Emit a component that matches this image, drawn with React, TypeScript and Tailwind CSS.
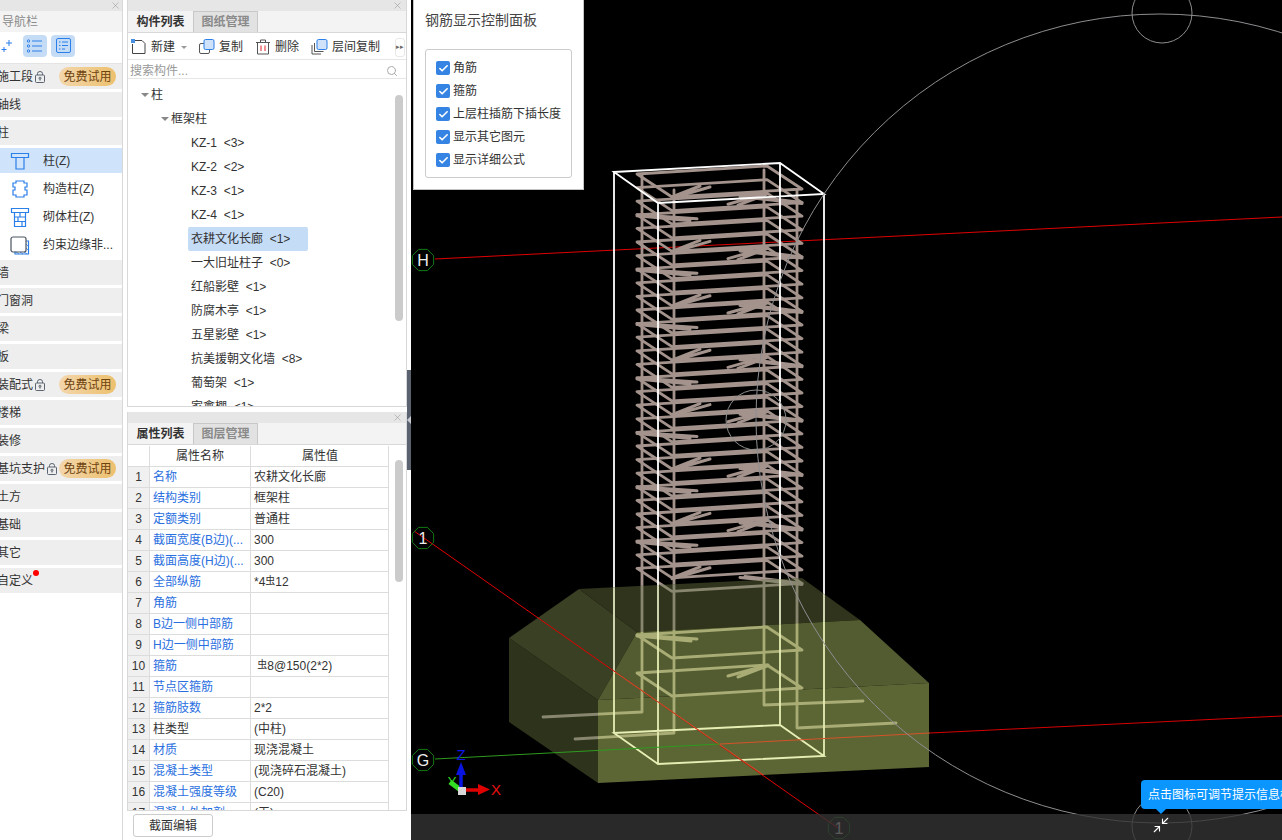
import { Check, Minimize2, Search, X } from "lucide-react";
import type { ReactNode } from "react";

const treeItems = [
  "KZ-1  <3>",
  "KZ-2  <2>",
  "KZ-3  <1>",
  "KZ-4  <1>",
  "衣耕文化长廊  <1>",
  "一大旧址柱子  <0>",
  "红船影壁  <1>",
  "防腐木亭  <1>",
  "五星影壁  <1>",
  "抗美援朝文化墙  <8>",
  "葡萄架  <1>",
  "家禽棚  <1>",
];

const props: [string, ReactNode, boolean][] = [
  ["名称", "农耕文化长廊", true],
  ["结构类别", "框架柱", true],
  ["定额类别", "普通柱", true],
  ["截面宽度(B边)(...", "300", true],
  ["截面高度(H边)(...", "300", true],
  ["全部纵筋", <>*4<Bar />12</>, true],
  ["角筋", "", true],
  ["B边一侧中部筋", "", true],
  ["H边一侧中部筋", "", true],
  ["箍筋", <>&nbsp;<Bar />8@150(2*2)</>, true],
  ["节点区箍筋", "", true],
  ["箍筋肢数", "2*2", true],
  ["柱类型", "(中柱)", false],
  ["材质", "现浇混凝土", true],
  ["混凝土类型", "(现浇碎石混凝土)", true],
  ["混凝土强度等级", "(C20)", true],
  ["混凝土外加剂", "(无)", true],
];

function Bar() {
  return <span className="relative -top-[2px] text-[10px]">虫</span>;
}

function Lock() {
  return (
    <svg width="10" height="12" viewBox="0 0 10 12" fill="none" stroke="#5b6470" strokeWidth="1" className="shrink-0">
      <rect x="0.5" y="4" width="9" height="7.5" rx="1" />
      <path d="M2.5 4V2.6a2.5 2.1 0 0 1 5 0V4" />
      <circle cx="5" cy="7.2" r="1" />
      <path d="M5 8v1.6" />
    </svg>
  );
}

function Badge() {
  return (
    <span className="ml-auto mr-[6px] flex h-[19px] w-[57px] shrink-0 items-center justify-center rounded-full bg-gradient-to-r from-[#f3d6ab] to-[#ecc06c] text-[12px] text-[#6e4310]">
      免费试用
    </span>
  );
}

function NavRow({ label, lock, dot }: { label: string; lock?: boolean; dot?: boolean }) {
  return (
    <div className="relative flex h-[25px] items-center bg-[#eeeeee] text-[12px] text-[#333]">
      <span className="-ml-[3px] whitespace-nowrap">{label}</span>
      {lock && <span className="ml-[2px]"><Lock /></span>}
      {lock && <Badge />}
      {dot && <span className="absolute left-[33px] top-[2px] h-[6px] w-[6px] rounded-full bg-[#f00]" />}
    </div>
  );
}

function ChildRow({ label, icon, active }: { label: string; icon: ReactNode; active?: boolean }) {
  return (
    <div className={`flex h-[25px] items-center text-[12px] text-[#333] ${active ? "bg-[#cfe4fb]" : ""}`}>
      <span className="ml-[10px] flex w-[33px] shrink-0">{icon}</span>
      <span className="whitespace-nowrap">{label}</span>
    </div>
  );
}

const blue = { fill: "none", stroke: "#2a7fe8", strokeWidth: 1.2 };

const columnIcon = (
  <svg width="20" height="20" viewBox="0 0 20 20" {...blue}>
    <path d="M1.5 2.5h17v4h-17zM6 6.5V18h8V6.5" />
  </svg>
);
const structIcon = (
  <svg width="20" height="20" viewBox="0 0 20 20" {...blue}>
    <path d="M6 2h8v2h3v4h-2v3h2v5h-3v2H6v-2H3v-5h2V8H3V4h3z" />
  </svg>
);
const masonryIcon = (
  <svg width="20" height="20" viewBox="0 0 20 20" {...blue}>
    <path d="M1.5 1.5h17v4h-17zM4.5 5.5v14h11v-14M4.5 10h11M4.5 14.500h11M10 5.500V10M8 10v4.500M12 14.500v5" />
  </svg>
);
const edgeIcon = (
  <svg width="20" height="20" viewBox="0 0 20 20" fill="none">
    <path d="M16 6h2.500v13H5v-2.500" stroke="#2a7fe8" strokeWidth="1.200" />
    <path d="M6 17l3 2M10 17l3 2M14 17l3 2M16 9l2 2M16 13l2 2" stroke="#2a7fe8" strokeWidth="0.800" />
    <rect x="1" y="2" width="15" height="15" rx="2" stroke="#4a5260" strokeWidth="1.200" />
  </svg>
);

function PanelHead({ first, second }: { first: string; second: string }) {
  return (
    <>
      <div className="flex h-[11px] shrink-0 items-center justify-end bg-[#e6e6e6] pr-[3px]">
        <X size={11} strokeWidth={1} className="text-[#888]" />
      </div>
      <div className="flex h-[22px] shrink-0 border-b border-[#d8d8d8] bg-[#f3f3f3] text-[12px]">
        <div className="flex w-[65px] items-center justify-center font-bold text-[#333]">{first}</div>
        <div className="flex w-[65px] items-center justify-center border-x border-t border-[#c8c8c8] bg-[#e2e2e2] font-bold text-[#8a8a8a]">{second}</div>
      </div>
    </>
  );
}

function ToolBtn({ icon, label, after }: { icon: ReactNode; label: string; after?: ReactNode }) {
  return (
    <div className="flex items-center gap-[4px] whitespace-nowrap text-[12px] text-[#333]">
      {icon}
      <span>{label}</span>
      {after}
    </div>
  );
}

function Scene() {
  const dense = Array.from({ length: 30 }, (_, i) => 174 + 13.6 * i);
  const stirrup = (y: number) => `M637 ${y}L767 ${y - 8}L802 ${y + 15}L672 ${y + 23}Z`;
  const hook = (y: number, i: number) => {
    if (i % 4 === 0) return `M672 ${y + 23}L700 ${y + 12}M672 ${y + 24}L710 ${y + 13}`;
    if (i % 4 === 1) return `M802 ${y + 15}L745 ${y + 8}M802 ${y + 16}L740 ${y + 9}`;
    if (i % 4 === 2) return `M767 ${y - 8}L728 ${y + 3}M767 ${y - 7}L738 ${y + 4}`;
    return `M637 ${y}L697 ${y + 4}M637 ${y + 1}L690 ${y + 6}`;
  };
  const label = (cx: number, cy: number, t: string) => {
    const pts = Array.from({ length: 8 }, (_, i) => {
      const a = (Math.PI / 4) * i + Math.PI / 8;
      return `${cx + 11.500 * Math.cos(a)},${cy + 11.500 * Math.sin(a)}`;
    }).join(" ");
    return (
      <g key={t + cx}>
        <polygon points={pts} fill="none" stroke="#137a13" strokeWidth="1" />
        <text x={cx} y={cy + 5.500} textAnchor="middle" fontSize="16" fill="#eee">{t}</text>
      </g>
    );
  };
  return (
    <svg viewBox="411 0 871 840" className="absolute inset-0 h-full w-full">
      <defs>
        <clipPath id="frontClip">
          <polygon points="637,632 860,620 929,683 929,767 598,783 598,700" />
        </clipPath>
        <clipPath id="backClip">
          <polygon points="509,638 579,589 802,578 860,620 637,632 598,700 598,783 509,722" />
        </clipPath>
        <g id="rebar" fill="none" strokeWidth="2.800" strokeLinejoin="round" strokeLinecap="round">
          <path d="M642 175V712L543 717M674 190V733L575 739M764 170V705L863 701M797 190V728L896 723" />
          {dense.map((y) => <path key={y} d={stirrup(y)} />)}
          {dense.map((y, i) => <path key={y} d={hook(y, i)} strokeWidth="3" />)}
          <path d={stirrup(635)} />
          <path d={stirrup(673)} />
          <path d="M637 635L697 639M637 636L691 641M768 665L728 676M767 666L738 677" strokeWidth="3" />
        </g>
        <g id="wire" fill="none" strokeWidth="1.800">
          <path d="M614 172L780 163L824 194L658 203ZM614 172V733M780 163V725M658 203V764M824 194V756M614 733L780 725L824 756L658 764Z" />
        </g>
      </defs>

      <path d="M435 259L1282 217" stroke="#e00000" strokeWidth="1" />
      <use href="#rebar" stroke="#a3938c" />
      <use href="#wire" stroke="#ffffff" />

      <polygon points="509,638 598,700 598,783 509,722" fill="#2e341b" />
      <polygon points="509,638 579,589 637,632 598,700" fill="#3a4024" />
      <polygon points="579,589 802,578 860,620 637,632" fill="#30341c" />
      <polygon points="860,620 929,683 598,700 637,632" fill="#525c30" />
      <polygon points="598,700 929,683 929,767 598,783" fill="#5c6635" />

      <g clipPath="url(#backClip)">
        <use href="#rebar" stroke="#88866f" />
        <use href="#wire" stroke="#dfe5c0" />
      </g>
      <g clipPath="url(#frontClip)">
        <use href="#rebar" stroke="#a9ac75" />
        <use href="#wire" stroke="#e6eeb4" />
      </g>

      <path d="M414 531L838 828" stroke="#e00000" strokeWidth="1" />
      <path d="M615 672L765 776" stroke="#c8552c" strokeWidth="1" clipPath="url(#frontClip)" />
      <path d="M435 759L720 744" stroke="#2f9a1f" strokeWidth="1" />
      <path d="M720 744L930 733" stroke="#d5532a" strokeWidth="1" />
      <path d="M930 733L1282 716" stroke="#d80000" strokeWidth="1" />

      <ellipse cx="1160" cy="418.500" rx="404" ry="404.500" fill="none" stroke="#8e8e92" strokeWidth="1" />
      <circle cx="1162" cy="13" r="30" fill="none" stroke="#8e8e8e" strokeWidth="1" />
      <circle cx="1162" cy="826" r="30" fill="none" stroke="#8e8e8e" strokeWidth="1" />
      <circle cx="756" cy="420" r="30" fill="none" stroke="#8e8e8e" strokeWidth="1" />

      {label(423, 260, "H")}
      {label(423, 538, "1")}
      {label(423, 760, "G")}
      {label(839, 828, "1")}

      <path d="M462 791L450 782" stroke="#33dd22" strokeWidth="5" />
      <path d="M461 791V768" stroke="#0a14e0" strokeWidth="3.500" />
      <polygon points="461,762 456,775 466,775" fill="#0a14e0" />
      <path d="M462 790H478" stroke="#e00000" strokeWidth="3.500" />
      <polygon points="490,789.500 478,784 478,795" fill="#e00000" />
      <rect x="458" y="787" width="8" height="8" fill="#d8d8d8" />
      <text x="461" y="760" textAnchor="middle" fontSize="15" fill="#1018e8">Z</text>
      <text x="496" y="795" textAnchor="middle" fontSize="15" fill="#e81010">X</text>
      <text x="452" y="786" textAnchor="middle" fontSize="13" fill="#33dd22">Y</text>
    </svg>
  );
}

export default function App() {
  return (
    <div className="relative flex h-[840px] w-[1282px] overflow-hidden bg-white font-['Liberation_Sans','Noto_Sans_CJK_SC',sans-serif]">
      {/* navigation */}
      <div className="flex w-[123px] shrink-0 flex-col border-r border-[#d8d8d8]">
        <div className="flex h-[11px] shrink-0 items-center justify-end bg-[#e6e6e6] pr-[1px]">
          <X size={11} strokeWidth={1} className="text-[#888]" />
        </div>
        <div className="flex h-[21px] shrink-0 items-center bg-[#f3f3f3] pl-[2px] text-[12px] text-[#8a8a8a]">导航栏</div>
        <div className="flex h-[32px] shrink-0 items-center border-b border-[#e4e4e4] pb-[4px]">
          <svg width="12" height="14" viewBox="0 0 12 14" fill="none" stroke="#2a7fe8" strokeWidth="1" className="ml-[1px]">
            <path d="M8 1v6M5 4h6M3 8v5M0.500 10.500h5" />
          </svg>
          <div className="ml-[10px] flex h-[22px] w-[24px] items-center justify-center rounded-[4px] bg-[#c5dcf6]">
            <svg width="16" height="14" viewBox="0 0 16 14" fill="none" stroke="#2a7fe8" strokeWidth="1">
              <circle cx="1.500" cy="2" r="1.200" /><circle cx="1.500" cy="7" r="1.200" /><circle cx="1.500" cy="12" r="1.200" />
              <path d="M5 2h10M5 7h10M5 12h10" />
            </svg>
          </div>
          <div className="ml-[4px] flex h-[22px] w-[24px] items-center justify-center rounded-[4px] bg-[#c5dcf6]">
            <svg width="15" height="15" viewBox="0 0 15 15" fill="none" stroke="#2a7fe8" strokeWidth="1">
              <rect x="0.500" y="0.500" width="14" height="14" rx="1.500" />
              <path d="M3 4h1.500M6 4h6M3 7.500h1.500M6 7.500h6M3 11h1.500M6 11h3" />
            </svg>
          </div>
        </div>
        <div className="flex flex-col gap-[3px]">
          <NavRow label="施工段" lock />
          <NavRow label="轴线" />
          <NavRow label="柱" />
          <ChildRow label="柱(Z)" icon={columnIcon} active />
          <ChildRow label="构造柱(Z)" icon={structIcon} />
          <ChildRow label="砌体柱(Z)" icon={masonryIcon} />
          <ChildRow label="约束边缘非..." icon={edgeIcon} />
          <NavRow label="墙" />
          <NavRow label="门窗洞" />
          <NavRow label="梁" />
          <NavRow label="板" />
          <NavRow label="装配式" lock />
          <NavRow label="楼梯" />
          <NavRow label="装修" />
          <NavRow label="基坑支护" lock />
          <NavRow label="土方" />
          <NavRow label="基础" />
          <NavRow label="其它" />
          <NavRow label="自定义" dot />
        </div>
      </div>

      {/* component list and properties */}
      <div className="ml-[4px] flex w-[280px] shrink-0 flex-col">
        <div className="flex h-[407px] shrink-0 flex-col overflow-hidden border-x border-b border-[#d8d8d8]">
          <PanelHead first="构件列表" second="图纸管理" />
          <div className="flex h-[27px] shrink-0 items-center gap-[12px] border-b border-[#e6e6e6] pl-[3px] pt-[2px]">
            <ToolBtn
              label="新建"
              icon={
                <svg width="16" height="16" viewBox="0 0 16 16" fill="none" stroke="#444" strokeWidth="1">
                  <path d="M4 1.500h7l3 3v10H1.500V5" />
                  <rect x="0" y="0" width="4" height="4" fill="#4a90e2" stroke="none" />
                </svg>
              }
              after={<span className="ml-[2px] h-0 w-0 border-x-[3px] border-t-[3px] border-x-transparent border-t-[#999]" />}
            />
            <ToolBtn
              label="复制"
              icon={
                <svg width="16" height="16" viewBox="0 0 16 16" fill="none" strokeWidth="1">
                  <rect x="0.500" y="4.500" width="10" height="10" rx="1.500" stroke="#555" />
                  <rect x="5" y="0.500" width="10" height="10" rx="1.500" fill="#cfe2fa" stroke="#2a7fe8" />
                </svg>
              }
            />
            <ToolBtn
              label="删除"
              icon={
                <svg width="16" height="16" viewBox="0 0 16 16" fill="none" stroke="#555" strokeWidth="1">
                  <path d="M1 3.500h14M5.500 3.500V1h5v2.500M2.500 3.500v11.500h11V3.500" />
                  <path d="M6 6.500v5.500M10 6.500v5.500" stroke="#e02020" />
                </svg>
              }
            />
            <ToolBtn
              label="层间复制"
              icon={
                <svg width="17" height="16" viewBox="0 0 17 16" fill="none" strokeWidth="1">
                  <path d="M1 6v9h9M3.500 4v8.500h9" stroke="#555" />
                  <rect x="6" y="0.500" width="10" height="10" rx="1.500" fill="#cfe2fa" stroke="#2a7fe8" />
                </svg>
              }
            />
            <div className="ml-[3px] flex h-[19px] w-[10px] items-center justify-center rounded-[3px] border border-[#e8e8e8] text-[7px] text-[#666]">▸▸</div>
          </div>
          <div className="flex h-[19px] shrink-0 items-center justify-between border-b border-[#e6e6e6] pl-[2px] pr-[8px] pt-[4px] text-[12px] text-[#999]">
            <span>搜索构件...</span>
            <Search size={12} className="text-[#aaa]" />
          </div>
          <div className="relative min-h-0 flex-1 overflow-hidden pt-[4px] text-[12px] text-[#333]">
            <div className="absolute right-[3px] top-[16px] h-[226px] w-[8px] rounded-full bg-[#cbcbcb]" />
            <div className="flex h-[24px] items-center pl-[13px]">
              <span className="mr-[2px] h-0 w-0 border-x-[4px] border-t-[4px] border-x-transparent border-t-[#888]" />柱
            </div>
            <div className="flex h-[24px] items-center pl-[33px]">
              <span className="mr-[2px] h-0 w-0 border-x-[4px] border-t-[4px] border-x-transparent border-t-[#888]" />框架柱
            </div>
            {treeItems.map((t) => (
              <div key={t} className="flex h-[24px] items-center pl-[60px]">
                <span className={`whitespace-pre rounded-[2px] px-[3px] py-[3px] ${t.startsWith("衣耕") ? "w-[120px] bg-[#c5dcf6]" : ""}`}>{t}</span>
              </div>
            ))}
          </div>
        </div>

        <div className="mt-[5px] flex min-h-0 flex-1 flex-col overflow-hidden border-x border-b border-[#d8d8d8]">
          <PanelHead first="属性列表" second="图层管理" />
          <div className="relative min-h-0 flex-1 overflow-hidden pt-[1px] text-[12px]">
            <div className="absolute right-[3px] top-[15px] h-[122px] w-[8px] rounded-full bg-[#cbcbcb]" />
            <div className="grid w-[261px] grid-cols-[22px_101px_138px] auto-rows-[21px] border-r border-[#dcdcdc]">
              <div className="border-b border-r border-[#dcdcdc]" />
              <div className="flex items-center justify-center border-b border-r border-[#dcdcdc] text-[#333]">属性名称</div>
              <div className="flex items-center justify-center border-b border-[#dcdcdc] text-[#333]">属性值</div>
              {props.map(([name, value, link], i) => (
                <div key={name} className="contents">
                  <div className="flex items-center justify-center border-b border-r border-[#dcdcdc] bg-[#f0f0f0] text-[#333]">{i + 1}</div>
                  <div className={`flex items-center overflow-hidden whitespace-nowrap border-b border-r border-[#dcdcdc] pl-[3px] ${link ? "text-[#2a6fe0]" : "text-[#333]"}`}>{name}</div>
                  <div className="flex items-center whitespace-nowrap border-b border-[#dcdcdc] pl-[3px] text-[#333]">{value}</div>
                </div>
              ))}
            </div>
          </div>
        </div>
        <div className="flex h-[29px] shrink-0 items-center pl-[6px]">
          <div className="flex h-[23px] w-[80px] items-center justify-center rounded-[3px] border border-[#cccccc] text-[12px] text-[#333]">截面编辑</div>
        </div>
      </div>

      {/* 3d view */}
      <div className="relative ml-[4px] min-w-0 flex-1 overflow-hidden bg-black">
        <Scene />
        <div className="absolute bottom-0 left-0 right-0 h-[26px] bg-[#333333]/80" />

        <div className="absolute left-[2px] top-0 h-[190px] w-[171px] border border-t-0 border-[#c4c4c4] bg-white pl-[11px]">
          <div className="pt-[10px] text-[14px] leading-[20px] text-[#444]">钢筋显示控制面板</div>
          <div className="mt-[19px] flex h-[129px] w-[147px] flex-col gap-[7px] rounded-[3px] border border-[#cccccc] pl-[10px] pt-[10px]">
            {["角筋", "箍筋", "上层柱插筋下插长度", "显示其它图元", "显示详细公式"].map((t) => (
              <div key={t} className="flex h-[16px] items-center gap-[3px] text-[12px] text-[#333]">
                <span className="flex h-[14px] w-[14px] items-center justify-center rounded-[2px] bg-[#3584e4]">
                  <Check size={11} strokeWidth={3.500} className="text-white" />
                </span>
                {t}
              </div>
            ))}
          </div>
        </div>

        <div className="absolute left-[730px] top-[780px] flex h-[29px] w-[170px] items-center whitespace-nowrap rounded-[4px] bg-[#0b95ff] pl-[7px] text-[12px] text-white">
          点击图标可调节提示信息框位置
          <span className="absolute left-[15px] top-[29px] h-0 w-0 border-x-[5px] border-t-[5px] border-x-transparent border-t-[#0b95ff]" />
        </div>
        <Minimize2 size={18} strokeWidth={1.500} className="absolute left-[741px] top-[816px] text-white" />
      </div>

      {/* splitter handle */}
      <div className="absolute left-[407px] top-[370px] flex h-[100px] w-[4px] items-center justify-center bg-[#59626e]">
        <span className="h-0 w-0 border-y-[4px] border-r-[4px] border-y-transparent border-r-[#c8ccd2]" />
      </div>
    </div>
  );
}
